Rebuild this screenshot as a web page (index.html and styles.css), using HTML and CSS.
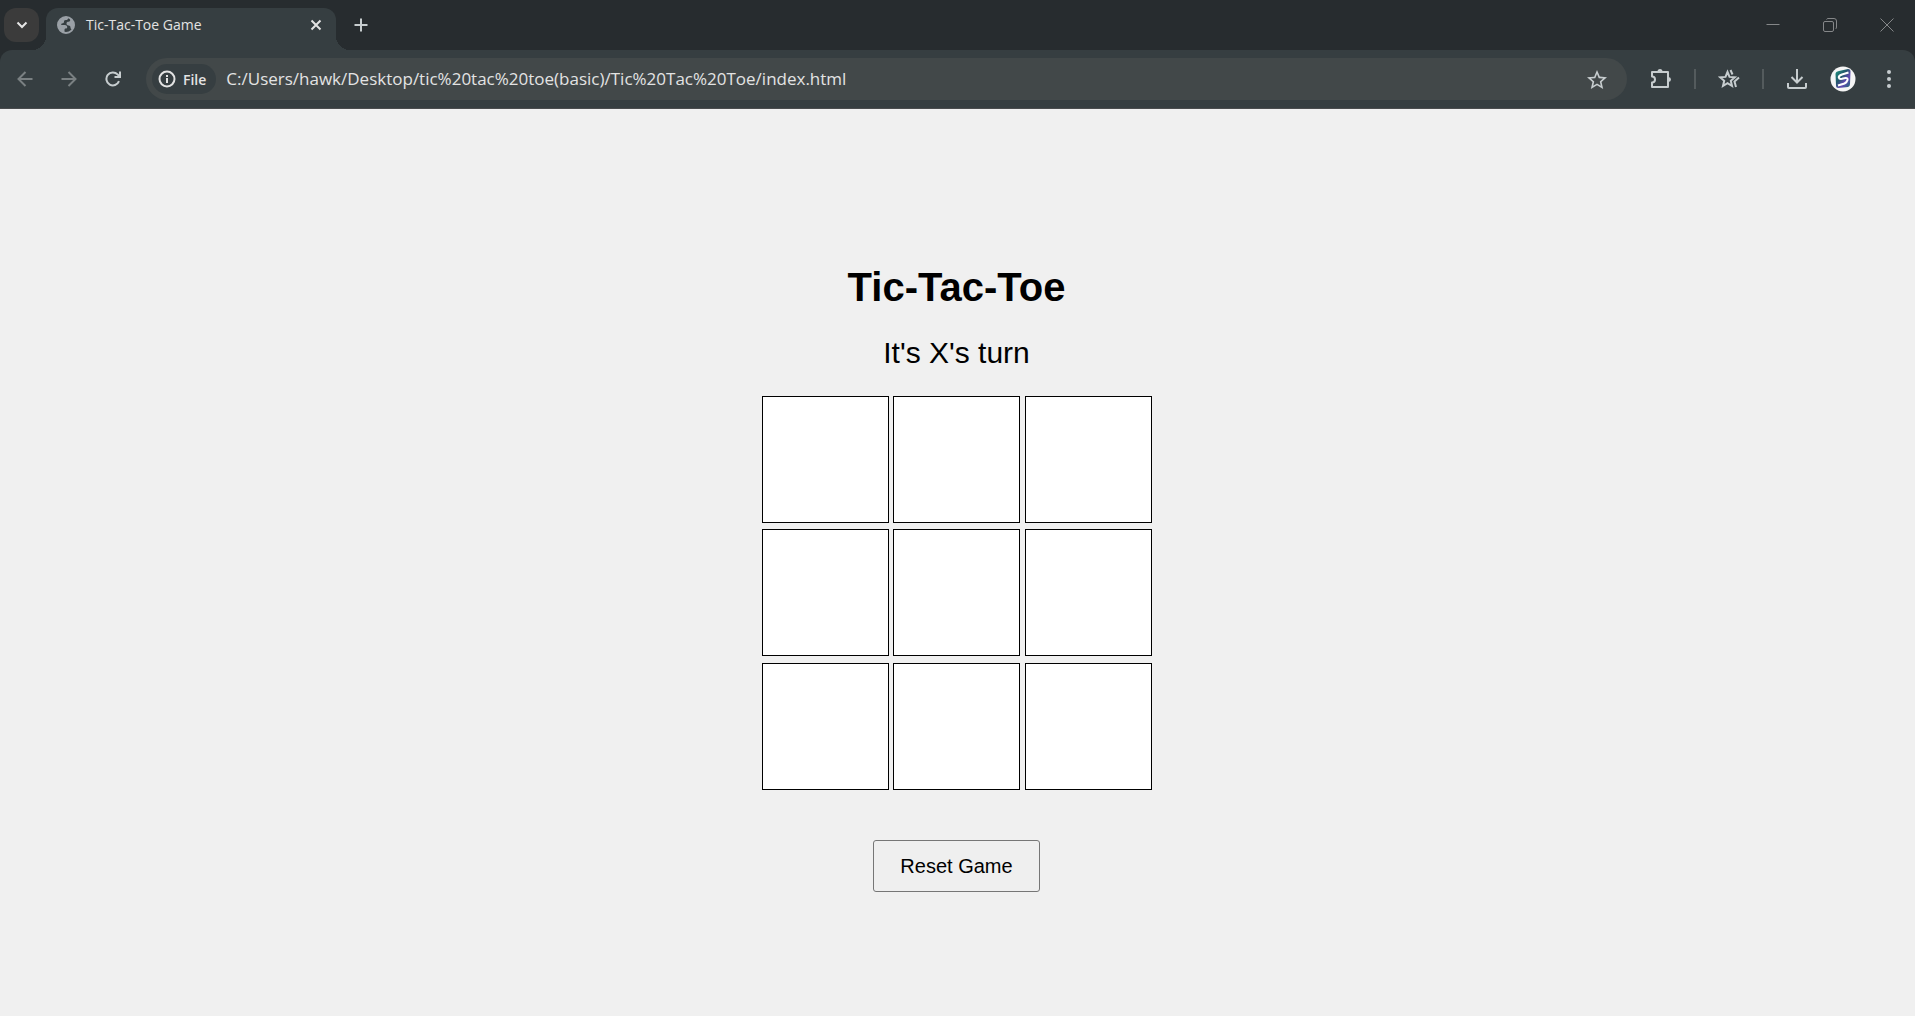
FILE: index.html
```html
<!DOCTYPE html>
<html lang="en">
<head>
<meta charset="utf-8">
<title>Tic-Tac-Toe Game</title>
<link rel="stylesheet" href="styles.css">
</head>
<body>
<header class="browser">
  <div class="tabstrip">
    <button class="tab-search" aria-label="Search tabs"><svg width="12" height="8" viewBox="0 0 12 8" fill="none" stroke="currentColor" stroke-width="2"><path d="M1.5 1.5 6 6l4.500-4.500"/></svg></button>
    <div class="tab">
      <svg class="favicon" width="18" height="18" viewBox="0 0 18 18"><circle cx="9" cy="9" r="8" fill="none" stroke="currentColor" stroke-width="2"/><path fill="currentColor" d="M1 8.500C1.500 4 5 1 9 1l2 .4c.3 1.600-.6 2.600-2.200 2.600-1.500 0-1.800.8-1.800 1.800 0 1.200-.8 1.700-2 1.700-.9 0-1.200 1-.4 1.500h3.200c1.800 0 2.400 1 2.400 2.200 0 1-.7 1.300-1.500 1.300-.9 0-1.200.6-1.200 1.500V17C3.500 17 .8 13 1 8.500zM13 2.500c2.500 1.300 4 3.800 4 6.500 0 1.500-.4 3-1.200 4.200-1.300.4-2.300-.2-2.300-1.700 0-1.300-.7-2-2-2-1.500 0-2-.9-2-1.900 0-1.200.7-1.800 2-1.800 1.200 0 1.700-.6 1.700-1.700z"/></svg>
      <span class="tab-title">Tic-Tac-Toe Game</span>
      <button class="icon-button tab-close" aria-label="Close tab"><svg width="12" height="12" viewBox="0 0 12 12" fill="none" stroke="currentColor" stroke-width="2"><path d="m1.500 1.500 9 9m0-9-9 9"/></svg></button>
    </div>
    <button class="icon-button new-tab" aria-label="New tab"><svg width="14" height="14" viewBox="0 0 14 14" fill="none" stroke="currentColor" stroke-width="2"><path d="M7 .5v13M.5 7h13"/></svg></button>
    <div class="window-controls">
      <button class="icon-button" aria-label="Minimize"><svg width="14" height="14" viewBox="0 0 14 14" fill="none" stroke="currentColor"><path d="M.5 6.500h13"/></svg></button>
      <button class="icon-button" aria-label="Restore"><svg width="14" height="14" viewBox="0 0 14 14" fill="none" stroke="currentColor"><rect x=".5" y="3.500" width="10" height="10" rx="1.500"/><path d="M3.500 1.500Q4 .5 5 .5h6Q13.500.5 13.500 3v6q0 1.500-1 2"/></svg></button>
      <button class="icon-button" aria-label="Close"><svg width="14" height="14" viewBox="0 0 14 14" fill="none" stroke="currentColor"><path d="m.5.5 13 13m0-13-13 13"/></svg></button>
    </div>
  </div>
  <div class="toolbar">
    <nav class="nav">
      <button class="icon-button dim" aria-label="Back"><svg width="16" height="16" viewBox="0 0 16 16" fill="none" stroke="currentColor" stroke-width="2"><path d="M15.500 8H2M8.500 1 1.500 8l7 7"/></svg></button>
      <button class="icon-button dim" aria-label="Forward"><svg width="16" height="16" viewBox="0 0 16 16" fill="none" stroke="currentColor" stroke-width="2"><path d="M.5 8H14M7.500 1l7 7-7 7"/></svg></button>
      <button class="icon-button" aria-label="Reload"><svg width="16" height="16" viewBox="0 0 16 16" fill="none" stroke="currentColor" stroke-width="2"><path d="M14 10.200A6.500 6.500 0 1 1 12.600 3.400L15 6M15 .5V6H9.500"/></svg></button>
    </nav>
    <div class="omnibox">
      <button class="chip"><svg width="18" height="18" viewBox="0 0 18 18" fill="none" stroke="currentColor" stroke-width="2"><circle cx="9" cy="9" r="7.500"/><path d="M9 8v5M9 5v2"/></svg><span>File</span></button>
      <input class="url" type="text" aria-label="Address" value="C:/Users/hawk/Desktop/tic%20tac%20toe(basic)/Tic%20Tac%20Toe/index.html">
      <button class="icon-button" aria-label="Bookmark this page"><svg width="20" height="20" viewBox="2 1 20 20" fill="currentColor"><path d="M22 9.240l-7.190-.62L12 2 9.190 8.630 2 9.240l5.460 4.730L5.820 21 12 17.270 18.180 21l-1.630-7.030L22 9.240zM12 15.400l-3.760 2.270 1-4.280-3.320-2.880 4.380-.38L12 6.100l1.710 4.040 4.380.38-3.320 2.880 1 4.280L12 15.400z"/></svg></button>
    </div>
    <div class="actions">
      <button class="icon-button" aria-label="Extensions"><svg width="22" height="22" viewBox="0 0 22 22" fill="none" stroke="currentColor" stroke-width="2"><path d="M2 4h16v15H2v-4.500c2 0 3-1.300 3-3s-1-3-3-3z" stroke-linejoin="round"/><path d="M7.500 3.500a2.500 2.500 0 0 1 5 0zM18.500 9a2.500 2.500 0 0 1 0 5z" fill="currentColor" stroke="none"/></svg></button>
      <span class="divider"></span>
      <button class="icon-button" aria-label="Bookmarks"><svg width="22" height="20" viewBox="0 0 22 20" fill="none" stroke="currentColor" stroke-width="2"><path d="m9.500 3 2 4.900 5.300.4-4 3.500 1.200 5.200-4.500-2.800L5 17l1.200-5.200-4-3.500 5.300-.4zM12.500 1l2 4.500M21 8.500l-4.500 4L18 18"/></svg></button>
      <span class="divider"></span>
      <button class="icon-button" aria-label="Downloads"><svg width="20" height="20" viewBox="0 0 20 20" fill="none" stroke="currentColor" stroke-width="2"><path d="M10 0v13M4.500 8 10 13.500 15.500 8M1 14v4q0 1 1 1h16q1 0 1-1v-4"/></svg></button>
      <button class="icon-button" aria-label="Profile"><svg width="26" height="26" viewBox="0 0 26 26"><defs><linearGradient id="logo" x2="1" y2="1"><stop stop-color="#1c9a80"/><stop offset=".4" stop-color="#24566a"/><stop offset=".65" stop-color="#6448b4"/><stop offset="1" stop-color="#176b70"/></linearGradient></defs><circle cx="13" cy="13" r="12.500" fill="#f5f5f5"/><path d="M9 5 18 3q2.500 0 2.500 2.500L20 18q0 2.500-2 3L8.500 22Q6 22 6 19.500L5.500 8Q5.500 5.500 9 5z" fill="url(#logo)"/><path d="M18.500 6.500 12 8.500Q8.500 9.800 8.800 11.500t3.200 1.300l3.500-.8q2.500-.2 2 2T14.500 17.500L8 19.500" fill="none" stroke="#fff" stroke-width="2"/></svg></button>
      <button class="icon-button" aria-label="Menu"><svg width="4" height="18" viewBox="0 0 4 18" fill="currentColor"><circle cx="2" cy="2" r="2"/><circle cx="2" cy="9" r="2"/><circle cx="2" cy="16" r="2"/></svg></button>
    </div>
  </div>
</header>
<main class="game">
  <h1 class="title">Tic-Tac-Toe</h1>
  <p class="status">It's X's turn</p>
  <div class="board">
    <button class="cell" aria-label="Row 1, column 1"></button>
    <button class="cell" aria-label="Row 1, column 2"></button>
    <button class="cell" aria-label="Row 1, column 3"></button>
    <button class="cell" aria-label="Row 2, column 1"></button>
    <button class="cell" aria-label="Row 2, column 2"></button>
    <button class="cell" aria-label="Row 2, column 3"></button>
    <button class="cell" aria-label="Row 3, column 1"></button>
    <button class="cell" aria-label="Row 3, column 2"></button>
    <button class="cell" aria-label="Row 3, column 3"></button>
  </div>
  <button class="reset">Reset Game</button>
</main>
</body>
</html>
```
FILE: styles.css
```css
* { box-sizing: border-box; }

body {
  margin: 0;
  min-height: 100vh;
  display: flex;
  flex-direction: column;
  background: #f0f0f0;
  font-family: "Liberation Sans", Arial, sans-serif;
}

button { padding: 0; border: 0; background: none; color: inherit; font: inherit; }
svg { display: block; flex: none; }

.browser {
  background: #272c2f;
  color: #c7cdcf;
  font-family: "Open Sans", "Segoe UI", sans-serif;
}

.tabstrip {
  display: flex;
  align-items: flex-start;
  height: 50px;
  padding: 8px 0 0 4px;
}

.tab-search {
  display: grid;
  place-items: center;
  width: 35px;
  height: 34px;
  margin-right: 7px;
  border-radius: 12px;
  background: #3b3b3b;
  color: #e6e6e6;
}

.tab {
  position: relative;
  display: flex;
  align-items: center;
  width: 290px;
  height: 42px;
  padding: 0 9px 8px 11px;
  border-radius: 12px 12px 0 0;
  background: #363e41;
}

/* flared feet of the active tab */
.tab::before,
.tab::after {
  content: "";
  position: absolute;
  bottom: 0;
  width: 14px;
  height: 14px;
}
.tab::before { right: 100%; background: radial-gradient(circle at 0 0, transparent 14px, #363e41 14px); }
.tab::after { left: 100%; background: radial-gradient(circle at 100% 0, transparent 14px, #363e41 14px); }

.favicon { color: #9aa0a6; }
.tab-title { flex: 1; margin-left: 11px; color: #e3e3e3; font-size: 14px; line-height: 20px; white-space: nowrap; }

.icon-button { display: grid; place-items: center; flex: none; }
.tab-close { width: 22px; height: 22px; color: #e3e3e3; }
.new-tab { width: 34px; height: 34px; margin-left: 8px; }

.window-controls { display: flex; margin-left: auto; color: #858789; }
.window-controls .icon-button { width: 57px; height: 34px; }

.toolbar {
  display: flex;
  align-items: center;
  height: 59px;
  padding: 0 3px;
  border-bottom: 1px solid #4a4c4e;
  border-radius: 12px 12px 0 0;
  background: #363e41;
}

.nav { display: flex; margin-right: 11px; }
.nav .icon-button { width: 44px; height: 42px; }
.dim { color: #7a8082; }

.omnibox {
  display: flex;
  align-items: center;
  flex: 1;
  height: 42px;
  padding: 0 20px 0 6px;
  border-radius: 21px;
  background: #424849;
}

.chip {
  display: flex;
  align-items: center;
  gap: 7px;
  height: 30px;
  padding: 0 10px 0 6px;
  border-radius: 15px;
  background: #363e41;
  color: #e3e3e3;
  font-size: 14px;
  font-weight: 600;
}

.url {
  flex: 1;
  min-width: 0;
  margin-left: 10px;
  padding: 0;
  border: 0;
  outline: 0;
  background: none;
  color: #e3e3e3;
  font: 17px/24px "Open Sans", "Segoe UI", sans-serif;
}

.actions { display: flex; align-items: center; margin-left: 11px; }
.actions .icon-button { width: 34px; height: 42px; margin: 0 6px; }
.divider { width: 2px; height: 20px; margin: 0 10px; background: #545b5d; }

.game {
  flex: 1;
  display: flex;
  flex-direction: column;
  align-items: center;
  justify-content: center;
  padding: 30px 2px 0 0;
  color: #000;
}

.title { margin: 0 0 26px; font-size: 40px; line-height: 46px; }
.status { margin: 0 0 26px; font-size: 30px; line-height: 34px; }

.board {
  display: grid;
  grid-template-columns: repeat(3, 127px);
  justify-content: space-between;
  align-content: space-between;
  width: 390px;
  height: 394px;
  margin-bottom: 50px;
}

.cell { height: 127px; border: 1px solid #000; background: #fff; font-size: 40px; }

.reset {
  padding: 12px 26px;
  border: 1px solid #767676;
  border-radius: 3px;
  background: #efefef;
  font-size: 20px;
  line-height: 26px;
}
```
